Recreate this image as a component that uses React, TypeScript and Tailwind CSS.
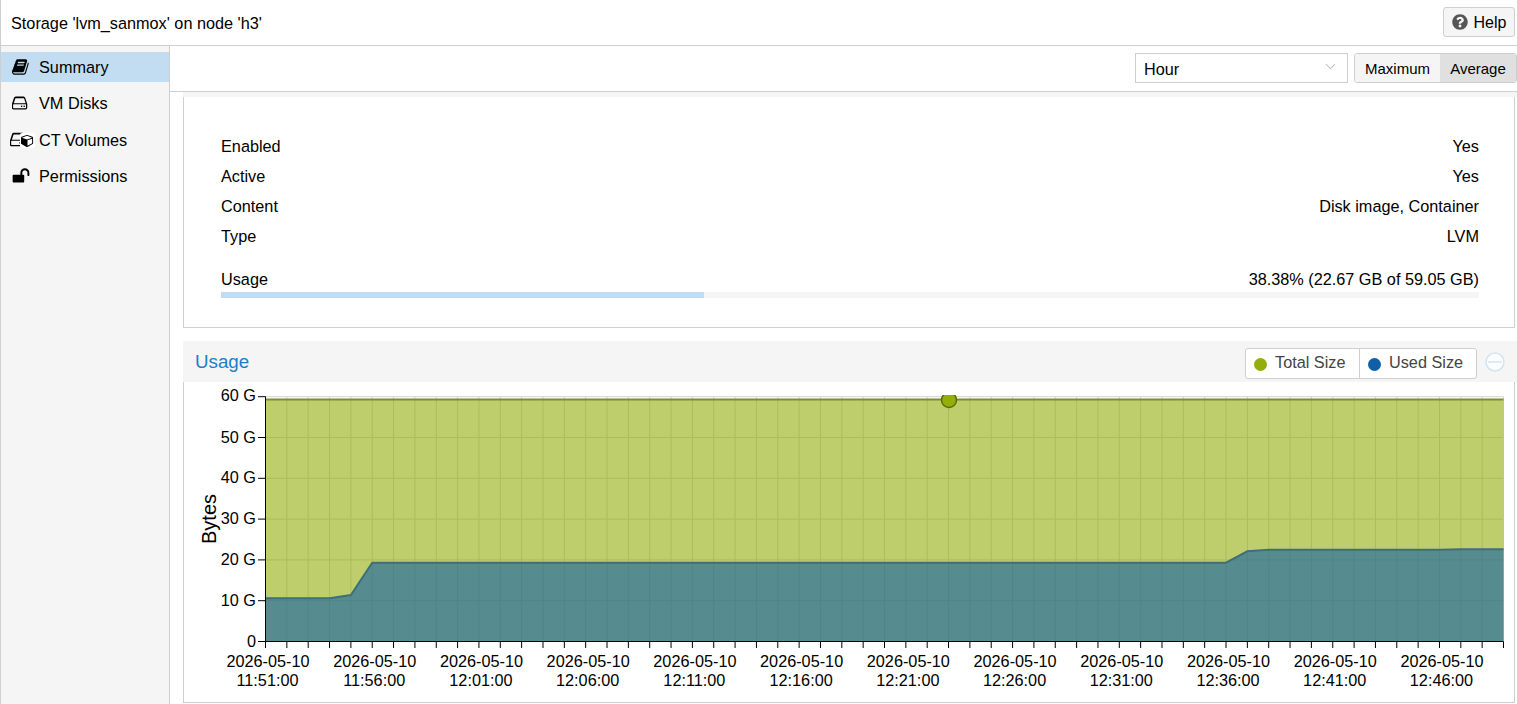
import { FaQuestionCircle } from "react-icons/fa";
import { ChevronDown } from "lucide-react";

const X0 = 265.5;
const STEP = 21.345;
const Y0 = 641.5;
const PER_G = 4.08;
const TOTAL_Y = 399.5;

const xAt = (i: number) => X0 + i * STEP;
const yAt = (v: number) => Y0 - v * PER_G;

// used size, one value per minute where it changes
const used: [number, number][] = [
  [0, 10.6],
  [3, 10.6],
  [4, 11.4],
  [5, 19.3],
  [45, 19.3],
  [46, 22.1],
  [47, 22.5],
  [55, 22.5],
  [56, 22.6],
  [58, 22.6],
];

const times = [
  "11:51:00", "11:56:00", "12:01:00", "12:06:00", "12:11:00", "12:16:00",
  "12:21:00", "12:26:00", "12:31:00", "12:36:00", "12:41:00", "12:46:00",
];

const minutes = Array.from({ length: 59 }, (_, i) => i);
const gbTicks = [0, 10, 20, 30, 40, 50, 60];

// font-awesome 4 glyphs, the newer sets in react-icons draw these differently
const BOOK =
  "M1639 478q40 57 18 129l-275 906q-19 64-76.5 107.5t-122.5 43.5h-923q-77 0-148.5-53.5t-99.5-131.5q-24-67-2-127 0-4 3-27t4-37q1-8-3-21.5t-3-19.5q2-11 8-21t16.5-23.5 16.5-23.5q23-38 45-91.5t30-91.5q3-10 .5-30t-.5-28q3-11 17-28t17-23q21-36 42-92t25-90q1-9-2.5-32t.5-28q4-13 22-30.5t22-22.5q19-26 42.5-84.5t27.5-96.5q1-8-3-25.5t-2-26.5q2-8 9-18t18-23 17-21q8-12 16.5-30.5t15-35 16-36 19.5-32 26.5-23.5 36-11.5 47.5 5.5l-1 3q38-9 51-9h761q74 0 114 56t18 130l-274 906q-36 119-71.5 153.5t-128.5 34.5h-869q-27 0-38 15-11 16-1 43 24 70 144 70h923q29 0 56-15.5t35-41.5l300-987q7-22 5-57 38 15 59 43zm-1064 2q-4 13 2 22.5t20 9.5h608q13 0 25.5-9.5t16.5-22.5l21-64q4-13-2-22.5t-20-9.5h-608q-13 0-25.5 9.5t-16.5 22.5zm-83 256q-4 13 2 22.5t20 9.5h608q13 0 25.5-9.5t16.5-22.5l21-64q4-13-2-22.5t-20-9.5h-608q-13 0-25.5 9.5t-16.5 22.5z";
const HDD =
  "M1040 1216q0 33-23.5 56.5t-56.5 23.5-56.5-23.5-23.5-56.5 23.5-56.5 56.5-23.5 56.5 23.5 23.5 56.5zm256 0q0 33-23.5 56.5t-56.5 23.5-56.5-23.5-23.5-56.5 23.5-56.5 56.5-23.5 56.5 23.5 23.5 56.5zm96 160v-320q0-13-9.5-22.5t-22.5-9.5h-1216q-13 0-22.5 9.5t-9.5 22.5v320q0 13 9.5 22.5t22.5 9.5h1216q13 0 22.5-9.5t9.5-22.5zm-1217-448h1186l-157-482q-4-13-16-21.5t-26-8.5h-788q-14 0-26 8.5t-16 21.5zm1345 128v320q0 66-47 113t-113 47h-1216q-66 0-113-47t-47-113v-320q0-25 16-75l197-606q17-53 63-86t101-33h788q55 0 101 33t63 86l197 606q16 50 16 75z";
const CUBE =
  "M896 1629l640-349v-636l-640 233v752zm-64-865l698-254-698-254-698 254zm832-252v768q0 35-18 65t-49 47l-704 384q-28 16-61 16t-61-16l-704-384q-31-17-49-47t-18-65v-768q0-40 23-73t61-47l704-256q22-8 44-8t44 8l704 256q38 14 61 47t23 73z";
const UNLOCK =
  "M1728 576v256q0 26-19 45t-45 19h-64q-26 0-45-19t-19-45v-256q0-106-75-181t-181-75-181 75-75 181v192h96q40 0 68 28t28 68v576q0 40-28 68t-68 28h-960q-40 0-68-28t-28-68v-576q0-40 28-68t68-28h672v-192q0-185 131.5-316.5t316.5-131.5 316.5 131.5 131.5 316.5z";

function Fa({ d, className }: { d: string; className?: string }) {
  return (
    <svg viewBox="0 0 1792 1792" className={className} fill="currentColor">
      <path d={d} />
    </svg>
  );
}

function CtIcon() {
  return (
    <span className="relative block w-[24px] h-[18px] ml-[2px]">
      <Fa d={HDD} className="absolute left-0 -top-[1px] w-[19px] h-[19px]" />
      <span className="absolute left-[10px] top-[2px] bg-white rounded-[2px] p-px">
        <Fa d={CUBE} className="w-[13px] h-[13px]" />
      </span>
    </span>
  );
}

const navItems = [
  { label: "Summary", icon: <Fa d={BOOK} className="w-[18px] h-[18px]" />, active: true },
  { label: "VM Disks", icon: <Fa d={HDD} className="w-[18px] h-[18px]" /> },
  { label: "CT Volumes", icon: <CtIcon /> },
  { label: "Permissions", icon: <Fa d={UNLOCK} className="w-[18px] h-[18px]" /> },
];

const rows = [
  ["Enabled", "Yes"],
  ["Active", "Yes"],
  ["Content", "Disk image, Container"],
  ["Type", "LVM"],
];

function UsageChart() {
  const usedPts = used.map(([i, v]) => `${xAt(i)},${yAt(v)}`).join(" L");
  const right = xAt(58);
  return (
    <svg
      viewBox="184 382 1330 320"
      className="block w-[1330px] h-[320px]"
      fontFamily="'Liberation Sans', Arial, sans-serif"
      fontSize="16.25"
      fill="#000"
    >
      <defs>
        <clipPath id="marker-clip">
          <rect x="930" y="395" width="40" height="20" />
        </clipPath>
      </defs>

      {minutes.map((i) => (
        <line key={i} x1={xAt(i)} x2={xAt(i)} y1={397} y2={Y0} stroke="#d2d2d2" />
      ))}
      {gbTicks.map((g) => (
        <line key={g} x1={X0} x2={right} y1={yAt(g)} y2={yAt(g)} stroke="#d2d2d2" />
      ))}

      <path
        d={`M${X0},${TOTAL_Y} L${right},${TOTAL_Y} L${right},${Y0} L${X0},${Y0} Z`}
        fill="#94ae0a"
        fillOpacity="0.6"
      />
      <path d={`M${X0},${TOTAL_Y} L${right},${TOTAL_Y}`} stroke="#7d8f2e" strokeWidth="2" fill="none" />
      <path d={`M${usedPts} L${right},${Y0} L${X0},${Y0} Z`} fill="#115fa6" fillOpacity="0.6" />
      <path d={`M${usedPts}`} stroke="#3f6f78" strokeWidth="2" fill="none" />

      <circle
        cx="949"
        cy="400"
        r="7.5"
        fill="#94ae0a"
        stroke="#5d6d06"
        strokeWidth="1.5"
        clipPath="url(#marker-clip)"
      />

      <path d={`M${X0},396.5 V${Y0} H${right}`} stroke="#000" fill="none" />
      {gbTicks.map((g) => (
        <g key={g}>
          <line x1={258} x2={X0} y1={yAt(g)} y2={yAt(g)} stroke="#000" />
          <text x={256} y={g === 60 ? yAt(g) + 4 : yAt(g) + 5} textAnchor="end">
            {g === 0 ? "0" : `${g} G`}
          </text>
        </g>
      ))}
      {minutes.map((i) => (
        <line key={i} x1={xAt(i)} x2={xAt(i)} y1={Y0} y2={648} stroke="#000" />
      ))}
      {times.map((t, i) => (
        <g key={t} textAnchor="middle">
          <text x={xAt(i * 5) + 2.5} y={667}>
            2026-05-10
          </text>
          <text x={xAt(i * 5) + 2} y={686}>
            {t}
          </text>
        </g>
      ))}
      <text transform="translate(216 519) rotate(-90)" textAnchor="middle" fontSize="20">
        Bytes
      </text>
    </svg>
  );
}

export default function App() {
  return (
    <div className="h-[704px] w-[1517px] overflow-hidden bg-white text-black text-[16.25px] font-['Liberation_Sans',Arial,sans-serif]">
      {/* Header */}
      <header className="h-[46px] flex items-center justify-between border-b border-[#cfcfcf] border-l pl-[10px] pr-[2px]">
        <div className="pt-[2px]">Storage 'lvm_sanmox' on node 'h3'</div>
        <button className="h-[30px] w-[72px] mb-[2px] flex items-center justify-center gap-[6px] bg-[#f5f5f5] border border-[#cfcfcf] rounded-[3px]">
          <FaQuestionCircle className="text-[16px] text-[#555]" />
          <span className="pt-[3px] text-[16px]">Help</span>
        </button>
      </header>

      <div className="flex h-[658px]">
        {/* Sidebar */}
        <nav className="w-[170px] shrink-0 bg-[#f5f5f5] border-r border-l border-[#cfcfcf] pt-[6px]">
          {navItems.map((item) => (
            <div
              key={item.label}
              className={`h-[30px] mb-[6.4px] flex items-center ${item.active ? "bg-[#c2ddf2]" : ""}`}
            >
              <span className="w-[38px] shrink-0 flex justify-center pl-[2px]">{item.icon}</span>
              <span>{item.label}</span>
            </div>
          ))}
        </nav>

        <main className="flex-1 min-w-0 flex flex-col">
          {/* Toolbar */}
          <div className="h-[46px] shrink-0 flex items-center justify-end gap-[6px] border-b border-[#cfcfcf] pb-[1px]">
            <div className="w-[213px] h-[30px] border border-[#cfcfcf] flex items-center justify-between pl-[8px] pr-[8px]">
              <span className="pt-[3px]">Hour</span>
              <ChevronDown className="w-[17px] h-[17px] text-[#c4c4c4] -mt-[4px]" strokeWidth={1.5} />
            </div>
            <div className="h-[30px] w-[163px] flex border border-[#cfcfcf] rounded-[3px] overflow-hidden text-[15px]">
              <span className="w-[85px] pt-[2px] flex items-center justify-center bg-[#f5f5f5]">Maximum</span>
              <span className="flex-1 pt-[2px] flex items-center justify-center bg-[#e0e0e0]">Average</span>
            </div>
          </div>

          <div className="flex-1 pl-[13px] flex flex-col">
            {/* Status panel */}
            <div className="h-[5px] shrink-0 bg-[#f5f5f5]" />
            <section className="h-[231px] shrink-0 mr-[2px] border border-t-0 border-[#cfcfcf] pl-[37px] pr-[35px] pt-[34px]">
              {rows.map(([label, value]) => (
                <div key={label} className="h-[30px] flex items-center justify-between">
                  <span>{label}</span>
                  <span>{value}</span>
                </div>
              ))}
              <div className="mt-[13px] flex justify-between h-[30px] items-center">
                <span>Usage</span>
                <span>38.38% (22.67 GB of 59.05 GB)</span>
              </div>
              <div className="h-[6px] -mt-[2px] bg-[#f5f5f5]">
                <div className="h-full w-[38.38%] bg-[#c2ddf2]" />
              </div>
            </section>

            {/* Usage chart panel */}
            <section className="mt-[13px] flex flex-col">
              <div className="h-[41px] bg-[#f5f5f5] flex items-center justify-between pl-[12px] pr-[12px]">
                <h2 className="text-[18.75px] text-[#1a80c9] pt-[2px]">Usage</h2>
                <div className="flex items-center gap-[8px] mt-[3px]">
                  <div className="h-[31px] flex bg-white border border-[#cfcfcf] rounded-[3px] text-[#444]">
                    <div className="w-[114px] flex items-center gap-[8px] pl-[8px] border-r border-[#cfcfcf]">
                      <span className="w-[13px] h-[13px] mt-[3px] rounded-full bg-[#94ae0a]" />
                      <span className="pb-[2px]">Total Size</span>
                    </div>
                    <div className="w-[116px] flex items-center gap-[8px] pl-[8px]">
                      <span className="w-[13px] h-[13px] mt-[3px] rounded-full bg-[#115fa6]" />
                      <span className="pb-[2px]">Used Size</span>
                    </div>
                  </div>
                  <svg viewBox="0 0 20 20" className="w-[20px] h-[20px] -mt-[3px]" fill="none" stroke="#d3e4f3" strokeWidth="1.5">
                    <circle cx="10" cy="10" r="9" fill="#fbfdff" />
                    <path d="M3 10h14" />
                  </svg>
                </div>
              </div>
              <div className="mr-[2px] h-[321px] border-l border-r border-b border-[#cfcfcf]">
                <UsageChart />
              </div>
            </section>
          </div>
        </main>
      </div>
    </div>
  );
}
